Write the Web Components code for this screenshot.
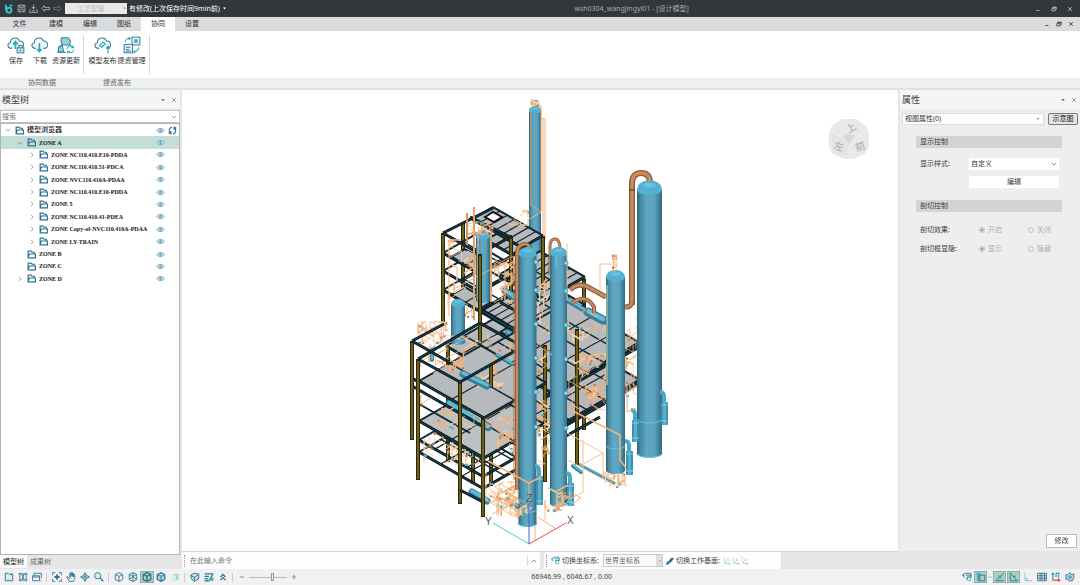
<!DOCTYPE html>
<html lang="zh-CN">
<head>
<meta charset="utf-8">
<title>设计模型</title>
<style>
    :root {
        --bar-dark: #32373b;
        --line: #d9dbdb;
        --panel: #eeeeee;
        --strip: #e6e6e6;
        --active: #a9cfc6;
        --selected: #c3ddd7;
        --text: #3c3c3c;
        --blue: #2f7192;
    }

    html, body {
        height: 100%;
        margin: 0;
    }

    body {
        font: 7px/10px "Noto Sans", "Noto Sans CJK SC", sans-serif;
        color: var(--text);
        overflow: hidden;
    }
</style>
</head>
<body>
<design-app></design-app>

<script>
/* Estilos comunes de los controles */
const base = /*html*/ `
<style>
    :host { box-sizing: border-box; }
    * { box-sizing: border-box; margin: 0; padding: 0; }
    button, input, select { font: inherit; color: inherit; border: 0; background: none; border-radius: 0; outline: none; }
    button { cursor: pointer; display: flex; align-items: center; justify-content: center; white-space: nowrap; }
    select { appearance: none; }
</style>`;

const cube = '<path d="M8 1l6 3v8l-6 3-6-3V4zM2 4l6 3 6-3M8 7v8"/>';
const cloud = '<path d="M9 22H7C0 21 0 12 6 12 6 2 20 1 22 9c9-1 10 12 2 13h-2" fill="#eef8fa"/>';

const icons = {
    logo: '<g stroke="#36c3cf" stroke-width="3"><path d="M3 1v9"/><circle cx="8" cy="10" r="4"/><path d="M9 3l4-1"/></g>',
    disk: '<path d="M2 2h12v12H2zM5 2v4h6V2M5 14V9h6v5"/>',
    export: '<path d="M8 1v7M5 5l3 4 3-4M3 9l-2 3v3h14v-3l-2-3M5 12h6"/>',
    undo: '<path d="M1 8l5-5v3h9v4H6v3z"/>',
    redo: '<path d="M15 8l-5-5v3H1v4h9v3z"/>',
    min: '<path d="M3 12h9" stroke-width="2"/>',
    restore: '<path d="M2 7h9v6H2zM5 7V3h9v6h-3M5 4h9" stroke-width="2"/>',
    close: '<path d="M3 3l10 10M13 3L3 13" stroke-width="2"/>',
    down: '<path d="M3 5h10l-5 6z" fill="currentColor" stroke="none"/>',
    chevron: '<path d="M2 5l6 6 6-6" stroke-width="2"/>',
    chevronUp: '<path d="M2 11l6-6 6 6" stroke-width="2"/>',
    chevronRight: '<path d="M5 2l6 6-6 6" stroke-width="2"/>',
    folder: '<path d="M2 14V2h5l2 2h4v3M2 14l2-7h11v7z" stroke-width="2"/>',
    eye: '<path d="M1 8c4-5 10-5 14 0-4 5-10 5-14 0z" fill="#e4f1f6" stroke="#5795b3"/><circle cx="8" cy="8" r="2" fill="#8fbdd2" stroke="#3f83a5"/>',
    sync: '<path d="M7 2C2 3 1 9 4 13M1 12l4 2V9M9 14c5-1 6-7 3-11M15 4l-4-2v5" stroke-width="2"/>',
    save: cloud + '<path d="M15 23V11M11 15l4-5 4 5" stroke="#28a9b4" stroke-width="3"/><rect x="18" y="21" width="12" height="9" fill="#c5dcea"/><path d="M21 21v-4h6v4M24 24v3"/>',
    download: cloud + '<path d="M15 13v14M11 23l4 5 4-5" stroke="#28a9b4" stroke-width="3"/>',
    refresh: '<path d="M8 3h12l4 6-2 7H9L7 9zM2 29l1-9 6-4 3 12z" fill="#8fd3d2"/><path d="M2 29h14M9 16l-6 4-1 9M22 16l3 1" /><path d="M18 23c0-6 8-7 10-3M29 17v4h-4M30 24c-1 6-8 7-10 3M19 31v-4h4" stroke="#28a9b4"/>',
    publish: cloud + '<path d="M10 17l6-6 4 3-6 6zM13 20l7-6M25 31V18M22 22l3-4 3 4" stroke="#28a9b4" stroke-width="2"/>',
    manage: '<rect x="16" y="2" width="14" height="14" fill="#e4f2f6"/><rect x="20" y="6" width="6" height="6" fill="#35afb5" stroke="none"/><rect x="2" y="15" width="15" height="15" fill="#e4f2f6"/><path d="M5 20h8M5 24h6M5 27h9"/><path d="M4 11c0-5 4-7 8-7M10 2l3 2-3 3M28 20c0 5-3 7-8 8M22 26l-3 2 3 3" stroke="#28a9b4"/>',
    file: '<path d="M2 14V2h5l2 2h5v10z" fill="#d2ebf0"/><path d="M10 2h4" stroke="#35afb5"/>',
    fit: '<path d="M3 1v14M13 1v14M1 3h14M1 13h14M6 3l4 10M10 3L6 13"/>',
    windows: '<path d="M3 6V2h12v8M1 6h11v8H1zM1 8h11"/><path d="M12 12l3 2" stroke="#35afb5"/>',
    zoomAll: '<path d="M1 5V1h4M11 1h4v4M15 11v4h-4M5 15H1v-4"/><path d="M8 4v8M4 8h8" stroke-width="3"/>',
    hand: '<path d="M4 9L2 7 1 8l4 7h7l2-5V4h-2v4-6h-2v5-6H8v6-5H6v8z" fill="#e4f2f5"/>',
    orbit: '<path d="M8 1l2 4 5 3-5 3-2 4-2-4-5-3 5-3zM4 8h8M8 4v8" fill="#cfe8ee"/>',
    lens: '<circle cx="6" cy="6" r="5" fill="#d2ebf0"/><path d="M10 10l5 5" stroke-width="2"/>',
    cube,
    cubeWire: cube + '<path d="M8 1v6M2 12l6-5 6 5"/>',
    cubeLine: '<g stroke-width="2">' + cube + '</g>',
    cubeShade: '<path d="M8 1l6 3v8l-6 3-6-3V4z" fill="#a8d3e0"/>' + cube,
    cubeSolid: '<path d="M3 5l5-2h6v8l-5 3H3z" fill="#a6d6dc" stroke="none"/><path d="M3 5h6v9H3z" fill="#dceff0" stroke="none"/>',
    section: '<path d="M1 5l5-3 8 1v8l-7 4-5-4zM2 6l5 2 7-4M7 8v6" fill="#b9dce4"/>',
    layers: '<path d="M1 3h14M1 7h7M1 11h6M1 14h8M9 12l5-8" stroke-width="2"/><path d="M9 9h6v5H9z" fill="#35afb5" stroke="none"/>',
    up2: '<path d="M4 8l4-4 4 4M4 13l4-4 4 4" stroke-width="2"/>',
    minus: '<path d="M2 8h12" stroke-width="3"/>',
    plus: '<path d="M2 8h12M8 2v12" stroke-width="3"/>',
    axis: '<path d="M1 5l4-3h9v3M4 5H1l3 4M6 5h9v3H8v4"/><circle cx="11" cy="11" r="3" stroke="#35afb5"/>',
    box: '<path d="M3 5h11v9H3zM6 2v12M3 8h3"/><circle cx="3" cy="3" r="2" stroke="#35afb5"/>',
    snap: '<path d="M1 14h13M2 13L14 2M6 6l3 4"/><circle cx="8" cy="8" r="2" stroke="#35afb5"/>',
    angle: '<path d="M2 1v13h12M3 2l10 12M7 8l4-2"/>',
    ortho: '<path d="M3 1v13h12M3 10h4v4" stroke="#8abdd0"/>',
    grid: '<path d="M1 2h14v12H1zM1 6h14M1 10h14M5 2v12M8 2v12M12 2v12"/>',
    dims: '<path d="M3 2v10M1 4l2-2 2 2M8 2h6M8 2v6M12 4v5" stroke="#28a9b4" stroke-width="2"/><path d="M2 13h12M11 11l3 2-3 2" stroke="#e14b4b" stroke-width="2"/>',
    gear: '<path d="M8 1l2 3 4-1 0 4 1 1-2 3-1 3-3-1-2 2-2-3-4-1 1-3-1-3 4-1z" fill="#b9dce4"/><circle cx="8" cy="8" r="2"/>',
    brush: '<path d="M1 15l2-6 4 4zM5 9l6-7 4 1-6 8z" fill="#1f668c" stroke="#1f668c"/>',
    plane: '<path d="M3 2l2 11 10 1M5 13l6-7M8 5l3 1v3" stroke="#9fdbe0"/><path d="M10 13l5 1" stroke="#f08b8b"/>'
};

class UiIcon extends HTMLElement {
    constructor() {
        super();
        this.attachShadow({ mode: 'open' });
    }

    connectedCallback() {
        const name = this.getAttribute('name');
        const size = this.getAttribute('size') || 10;
        // los iconos de la cinta usan una rejilla de 32
        const view = ['save', 'download', 'refresh', 'publish', 'manage'].includes(name) ? 32 : 16;
        this.shadowRoot.innerHTML = /*html*/ `
        <style>
            :host { display: inline-flex; flex: none; }
            svg { display: block; fill: none; stroke: currentColor; stroke-width: ${view === 32 ? 1.8 : 1.4}; }
        </style>
        <svg width="${size}" height="${size}" viewBox="0 0 ${view} ${view}" aria-hidden="true">${icons[name]}</svg>`;
    }
}
customElements.define('ui-icon', UiIcon);

class TitleBar extends HTMLElement {
    constructor() {
        super();
        this.attachShadow({ mode: 'open' }).innerHTML = base + /*html*/ `
        <style>
            :host {
                display: grid;
                grid-template-columns: 53% 1fr auto;
                align-items: center;
                height: 17px;
                background: var(--bar-dark);
                color: #fff;
            }
            .quick, .window { display: flex; align-items: center; gap: 2px; }
            .quick { padding-left: 4px; }
            .quick button { width: 10px; height: 14px; color: #b9c0c4; }
            .quick button:disabled { color: #70777b; }
            .box { display: flex; align-items: center; margin-left: 1px; width: 62px; height: 11px; background: #e9e9e9; color: #aaa; }
            select { flex: 1; padding-left: 12px; height: 11px; color: #c0c0c0; opacity: 1; }
            h1 { font-size: 7px; font-weight: 400; padding-left: 2px; color: #a7abad; }
            .window { gap: 6px; padding-right: 5px; color: #c4c7c9; }
            .window button { width: 10px; height: 12px; }
        </style>
        <div class="quick">
            <ui-icon name="logo" size="10"></ui-icon>
            <button aria-label="保存"><ui-icon name="disk" size="9"></ui-icon></button>
            <button aria-label="导出"><ui-icon name="export" size="9"></ui-icon></button>
            <button aria-label="撤销"><ui-icon name="undo" size="9"></ui-icon></button>
            <button aria-label="重做" disabled><ui-icon name="redo" size="9"></ui-icon></button>
            <div class="box"><select aria-label="专业" disabled><option>工艺配管</option></select><ui-icon name="down" size="5"></ui-icon></div>
            <span>有修改(上次保存时间9min前)</span>
            <ui-icon name="down" size="5"></ui-icon>
        </div>
        <h1>wsh0304_wangjingyi01 - [设计模型]</h1>
        <div class="window">
            <button aria-label="最小化"><ui-icon name="min" size="6"></ui-icon></button>
            <button aria-label="还原"><ui-icon name="restore" size="6"></ui-icon></button>
            <button aria-label="关闭"><ui-icon name="close" size="6"></ui-icon></button>
        </div>`;
    }
}
customElements.define('title-bar', TitleBar);

class MenuTabs extends HTMLElement {
    constructor() {
        super();
        this.attachShadow({ mode: 'open' }).innerHTML = base + /*html*/ `
        <style>
            :host { display: flex; height: 14px; background: #dadbdc; color: #303030; }
            .tab { width: 34px; }
            .tab:first-of-type { width: 39px; }
            .tab.on { background: #fff; }
            .window { display: flex; margin-left: auto; padding-right: 4px; gap: 2px; }
            .window button { width: 10px; }
        </style>
        ${['文件', '建模', '编辑', '图纸', '协同', '设置'].map(t => `<button class="tab ${t === '协同' ? 'on' : ''}">${t}</button>`).join('')}
        <div class="window">
            <button aria-label="最小化"><ui-icon name="min" size="6"></ui-icon></button>
            <button aria-label="还原"><ui-icon name="restore" size="6"></ui-icon></button>
            <button aria-label="关闭"><ui-icon name="close" size="6"></ui-icon></button>
        </div>`;
    }
}
customElements.define('menu-tabs', MenuTabs);

class RibbonButton extends HTMLElement {
    constructor() {
        super();
        this.attachShadow({ mode: 'open' });
    }

    connectedCallback() {
        this.shadowRoot.innerHTML = base + /*html*/ `
        <style>
            :host { display: block; min-width: 24px; }
            button { flex-direction: column; gap: 2px; width: 100%; color: #3f7f9d; }
            span { color: #333; }
        </style>
        <button><ui-icon name="${this.getAttribute('icon')}" size="18"></ui-icon><span><slot></slot></span></button>`;
    }
}
customElements.define('ribbon-button', RibbonButton);

class RibbonGroup extends HTMLElement {
    constructor() {
        super();
        this.attachShadow({ mode: 'open' });
    }

    connectedCallback() {
        this.shadowRoot.innerHTML = base + /*html*/ `
        <style>
            :host { display: flex; flex-direction: column; }
            .row { display: flex; height: 39px; margin: 4px 0; padding: 1px 3px 0 4px; border-right: 1px solid #d8dada; }
            p { text-align: center; color: #666; }
        </style>
        <div class="row"><slot></slot></div>
        <p>${this.getAttribute('label')}</p>`;
    }
}
customElements.define('ribbon-group', RibbonGroup);

class RibbonBar extends HTMLElement {
    constructor() {
        super();
        this.attachShadow({ mode: 'open' }).innerHTML = base + /*html*/ `
        <style>
            :host {
                display: flex;
                height: 59px;
                background: linear-gradient(#fff 47px, #edf1f1 47px);
                border-bottom: 2px solid #dfe1e1;
            }
            .wide { min-width: 29px; }
        </style>
        <ribbon-group label="协同数据">
            <ribbon-button icon="save">保存</ribbon-button>
            <ribbon-button icon="download">下载</ribbon-button>
            <ribbon-button icon="refresh">资源更新</ribbon-button>
        </ribbon-group>
        <ribbon-group label="提资发布">
            <ribbon-button class="wide" icon="publish">模型发布</ribbon-button>
            <ribbon-button class="wide" icon="manage">提资管理</ribbon-button>
        </ribbon-group>`;
    }
}
customElements.define('ribbon-bar', RibbonBar);

/* Cabecera común de los paneles laterales */
class PanelHeader extends HTMLElement {
    constructor() {
        super();
        this.attachShadow({ mode: 'open' }).innerHTML = base + /*html*/ `
        <style>
            :host { display: flex; align-items: center; height: 19px; background: #f5f5f5; }
            h2 { flex: 1; padding-left: 2px; font-size: 9px; font-weight: 400; }
            button { width: 11px; height: 11px; color: #777; }
            button:last-of-type { margin-right: 1px; }
        </style>
        <h2><slot></slot></h2>
        <button aria-label="选项"><ui-icon name="down" size="6"></ui-icon></button>
        <button aria-label="关闭"><ui-icon name="close" size="6"></ui-icon></button>`;
    }
}
customElements.define('panel-header', PanelHeader);

const nodes = [
    ['模型浏览器', 0, 'open'],
    ['ZONE A', 1, 'open'],
    ['ZONE NC110.410.E10-PDDA', 2, 'closed'],
    ['ZONE NC110.410.51-PDCA', 2, 'closed'],
    ['ZONE NVC110.410A-PDAA', 2, 'closed'],
    ['ZONE NC110.410.E10-PDDA', 2, 'closed'],
    ['ZONE 5', 2, 'closed'],
    ['ZONE NC110.410.41-PDEA', 2, 'closed'],
    ['ZONE Copy-of-NVC110.410A-PDAA', 2, 'closed'],
    ['ZONE LY-TRAIN', 2, 'closed'],
    ['ZONE B', 1, ''],
    ['ZONE C', 1, ''],
    ['ZONE D', 1, 'closed']
];

class ModelTree extends HTMLElement {
    constructor() {
        super();
        this.attachShadow({ mode: 'open' });
    }

    connectedCallback() {
        this.shadowRoot.innerHTML = base + /*html*/ `
        <style>
            :host { display: flex; flex-direction: column; min-height: 0; }
            .search { display: flex; align-items: center; height: 13px; margin-top: 1px; background: #fff; border: 1px solid #c4c4c4; padding-right: 2px; color: #888; }
            .search input { flex: 1; min-width: 0; padding-left: 1px; }
            .search input::placeholder { color: #777; opacity: 1; }
            .tree { flex: 1; background: #fff; border: 1px solid #b3b3bb; }
            ul { display: grid; grid-auto-rows: 1fr; height: 161px; list-style: none; }
            li { display: flex; align-items: center; gap: 3px; padding-left: calc(2px + var(--level) * 12px); color: var(--blue); }
            li.sel { background: var(--selected); }
            li button { width: 9px; height: 10px; }
            .toggle { color: #8a8a8a; }
            .name { flex: 1; white-space: nowrap; color: #111; font: bold 6px/10px "Liberation Serif", "Noto Sans CJK SC", serif; }
            .root .name { font-size: 7px; font-weight: 500; }
            .tail { width: 23px; display: flex; gap: 3px; }
            .tabs { display: flex; height: 14px; background: var(--strip); }
            .tabs button { padding: 0 3px; color: #666; height: 13px; }
            .tabs .on { background: #fafafa; color: #222; }
        </style>
        <panel-header>模型树</panel-header>
        <div class="search"><input type="text" aria-label="搜索" placeholder="搜索"><ui-icon name="chevron" size="6"></ui-icon></div>
        <div class="tree"><ul>${nodes.map((n, i) => this.row(n, i)).join('')}</ul></div>
        <div class="tabs"><button class="on">模型树</button><button>成果树</button></div>`;
    }

    row([name, level, state], i) {
        const arrow = state === 'open' ? 'chevron' : 'chevronRight';
        return /*html*/ `
        <li class="${i === 0 ? 'root' : ''} ${i === 1 ? 'sel' : ''}" style="--level:${level}">
            <button class="toggle" aria-label="展开">${state ? `<ui-icon name="${arrow}" size="6"></ui-icon>` : ''}</button>
            <ui-icon name="folder" size="9"></ui-icon>
            <span class="name">${name}</span>
            <span class="tail">
                <button aria-label="可见"><ui-icon name="eye" size="9"></ui-icon></button>
                ${i === 0 ? '<button aria-label="刷新"><ui-icon name="sync" size="9"></ui-icon></button>' : ''}
            </span>
        </li>`;
    }
}
customElements.define('model-tree', ModelTree);

/* Escena 3D de la planta, proyección isométrica */
class PlantScene extends HTMLElement {
    constructor() {
        super();
        this.attachShadow({ mode: 'open' });
        this.seed = 7;
        this.out = [];
    }

    connectedCallback() {
        this.draw();
        this.shadowRoot.innerHTML = /*html*/ `
        <style>
            :host { display: block; min-height: 0; overflow: hidden; background: #fff; }
            svg { display: block; width: 100%; height: 100%; }
            text { font: 10px "Liberation Sans", sans-serif; fill: #555; }
        </style>
        <svg viewBox="182 90 716 461" preserveAspectRatio="xMidYMid meet" role="img">
            <defs>
                <linearGradient id="steel">
                    <stop offset="0" stop-color="#2b6478"/>
                    <stop offset=".15" stop-color="#4a8ca4"/>
                    <stop offset=".4" stop-color="#5fa8c4"/>
                    <stop offset=".7" stop-color="#5ba3bf"/>
                    <stop offset="1" stop-color="#2f6a80"/>
                </linearGradient>
            </defs>
            ${this.out.join('')}
        </svg>`;
    }

    rnd() {
        this.seed = (this.seed * 16807) % 2147483647;
        return this.seed / 2147483647;
    }

    line(pts, color, w) {
        this.out.push(`<polyline points="${pts.join(' ')}" fill="none" stroke="${color}" stroke-width="${w}" stroke-linejoin="round"/>`);
    }

    beam(x1, y1, x2, y2, w = 3) {
        this.line([x1, y1, x2, y2], '#0b171c', w);
        this.line([x1, y1, x2, y2], '#17465a', w / 3);
    }

    column(x, y1, y2) {
        this.out.push(`<rect x="${x - 2}" y="${y1}" width="4" height="${y2 - y1}" fill="#2b2609"/><rect x="${x - 1}" y="${y1 + 2}" width="2" height="${y2 - y1 - 3}" fill="#6f6118"/>`);
    }

    // x,y: esquina izquierda; a: hacia abajo a la derecha; b: hacia arriba a la derecha
    slab(x, y, a, b, na, nb, fill) {
        const p = (s, t) => [x + s + t, y + s * 0.57 - t * 0.57];
        if (fill) {
            this.out.push(`<polygon points="${[p(0, 0), p(a, 0), p(a, b), p(0, b)].join(' ')}" fill="${fill}"/>`);
        }
        for (let i = 1; i < na; i++) this.line([p(a * i / na, 0), p(a * i / na, b)], '#1a2328', 1.2);
        for (let i = 1; i < nb; i++) this.line([p(0, b * i / nb), p(a, b * i / nb)], '#132a33', 1.5);
        this.beam(...p(0, b), ...p(a, b), 2);
        this.beam(...p(0, 0), ...p(0, b), 2);
        this.beam(...p(0, 0), ...p(a, 0));
        this.beam(...p(a, 0), ...p(a, b));
    }

    vessel(x, top, bottom, r) {
        const e = r / 2.6;
        this.out.push(`
            <path d="M${x - r} ${top + r * 0.8}V${bottom - e}A${r} ${e} 0 0 0 ${x + r} ${bottom - e}V${top + r * 0.8}z" fill="url(#steel)"/>
            <path d="M${x - r} ${top + r * 0.8}C${x - r} ${top - r * 0.25} ${x + r} ${top - r * 0.25} ${x + r} ${top + r * 0.8}A${r} ${e} 0 0 1 ${x - r} ${top + r * 0.8}z" fill="#55b0d0"/>
            <ellipse cx="${x}" cy="${top + r * 0.42}" rx="${r * 0.5}" ry="${r * 0.2}" fill="#66c2e0"/>`);
    }

    ring(x, y, r) {
        this.out.push(`<path d="M${x - r} ${y}A${r} ${r / 3} 0 0 0 ${x + r} ${y}" fill="none" stroke="#62c6e4"/>`);
    }

    drum(x1, y1, x2, y2, w) {
        this.out.push(`<line x1="${x1}" y1="${y1}" x2="${x2}" y2="${y2}" stroke="#35819c" stroke-width="${w}" stroke-linecap="round"/><line x1="${x1}" y1="${y1 - 1}" x2="${x2}" y2="${y2 - 1}" stroke="#61bad8" stroke-width="${w / 2}" stroke-linecap="round"/>`);
    }

    // intercambiador vertical con codo superior
    reboiler(x, y1, y2) {
        this.out.push(`<path d="M${x} ${y1}v-5q0-5-4-5" fill="none" stroke="#4aa7c6" stroke-width="4"/>
            <rect x="${x - 3}" y="${y1}" width="7" height="${y2 - y1}" rx="1" fill="#3f8fae"/><rect x="${x - 1}" y="${y1}" width="3" height="${y2 - y1}" fill="#57b1cf"/>
            <path d="M${x - 3} ${y1 + 3}h7M${x - 3} ${y2 - 4}h7" stroke="#7bd3ec"/>`);
    }

    duct(d, w) {
        this.out.push(`<path d="${d}" fill="none" stroke="#8b5d3b" stroke-width="${w}"/><path d="${d}" fill="none" stroke="#c98b5d" stroke-width="${w * 0.55}"/>`);
    }

    // tuberías finas con válvulas dentro de una zona
    piping(x, y, w, h, count, len = 12) {
        const dirs = [[0, 1], [0, -1], [1, 0.57], [-1, -0.57], [1, -0.57], [-1, 0.57]];
        for (let i = 0; i < count; i++) {
            let px = x + this.rnd() * w, py = y + this.rnd() * h;
            const pts = [[px.toFixed(1), py.toFixed(1)]];
            for (let k = 0; k < 3; k++) {
                const d = dirs[Math.floor(this.rnd() * 6)];
                const l = 2 + this.rnd() * len;
                px = Math.max(x, Math.min(x + w, px + d[0] * l));
                py = Math.max(y, Math.min(y + h, py + d[1] * l));
                pts.push([px.toFixed(1), py.toFixed(1)]);
            }
            this.line(pts, this.rnd() > 0.3 ? '#f4b27a' : '#f9cfa5', this.rnd() > 0.75 ? 1.5 : 0.8);
            if (i % 4 === 0) this.out.push(`<rect x="${pts[1][0]}" y="${pts[1][1]}" width="2" height="2" fill="#b9774a"/>`);
            if (i % 9 === 0) this.out.push(`<rect x="${pts[2][0]}" y="${pts[2][1]}" width="3" height="2" fill="#4db4d4"/>`);
        }
    }

    draw() {
        const grey = '#b6babd';
        const pale = '#f8c18f';
        const orange = '#f4b27a';

        // torre del fondo
        this.vessel(535, 106, 262, 6);
        this.line([531, 110, 531, 205, 541, 212, 541, 106, 535, 103], '#e8a169', 1);
        this.line([543, 118, 543, 240], orange, 1);
        this.line([545, 119, 545, 240], orange, 1);
        this.line([541, 118, 545, 119], orange, 1);
        this.line([541, 212, 528, 220, 528, 232], orange, 1);
        this.piping(531, 99, 8, 6, 8, 3);

        // bloque alto
        this.column(463, 222, 320);
        this.column(584, 279, 430);
        this.column(493, 208, 225);
        this.slab(446, 346, 90, 55, 6, 3, grey);
        this.slab(500, 332, 45, 42, 6, 2, grey);
        this.slab(480, 310, 58, 46, 9, 2, grey);
        this.beam(480, 310, 516, 331, 5);
        this.slab(443, 290, 37, 40, 2, 2, '');
        this.slab(451, 295, 27, 14, 2, 1, grey);
        this.slab(500, 302, 45, 40, 6, 2, grey);
        this.slab(443, 271, 37, 40, 2, 1, '');
        this.slab(500, 274, 45, 40, 6, 2, grey);
        this.slab(443, 253, 37, 40, 2, 2, '');
        this.slab(451, 257, 29, 14, 2, 1, grey);
        this.slab(486, 240, 26, 18, 3, 1, grey);
        this.slab(472, 219, 50, 21, 7, 1, grey);
        this.out.push('<polygon points="485,217 493,212 502,217 494,222" fill="#fff" stroke="#111" stroke-width="2"/>');
        this.beam(443, 233, 493, 208);
        this.beam(443, 233, 480, 254);
        this.beam(480, 254, 512, 236);
        this.beam(470, 217, 512, 238);
        this.column(511, 237, 300);
        this.column(543, 236, 290);
        this.drum(505, 291, 514, 297, 7);
        this.drum(508, 333, 516, 339, 6);
        this.piping(448, 240, 30, 76, 18, 10);
        this.piping(484, 256, 30, 50, 18);
        this.vessel(483, 231, 303, 7);
        this.piping(467, 222, 26, 12, 16, 6);
        this.line([467, 213, 467, 245], '#d29363', 2);
        this.line([474, 207, 474, 320], '#e0a473', 2);
        this.line([491, 232, 491, 302], '#e0a473', 2);
        this.line([478, 235, 478, 300], pale, 1);
        this.line([449, 240, 449, 316], orange, 1);
        this.line([452, 290, 505, 262, 505, 300], orange, 1);
        this.column(480, 254, 345);
        this.column(443, 233, 325);
        this.piping(508, 211, 20, 14, 6, 8);

        // plataformas de la derecha
        this.column(556, 390, 432);
        this.slab(480, 389, 75, 88, 3, 5, grey);
        this.beam(545, 434, 638, 381);
        this.drum(560, 362, 580, 373, 4);
        this.slab(480, 352, 75, 88, 3, 5, grey);
        this.beam(545, 397, 638, 344, 4);
        this.column(577, 329, 465);
        this.column(545, 345, 482);
        this.beam(566, 436, 600, 417);
        this.drum(588, 312, 603, 320, 9);
        this.drum(567, 300, 584, 310, 5);
        this.duct('M570 290q8-8 18-3l18 10', 5);
        this.duct('M572 303q14-10 22 4v6', 4);
        this.piping(580, 354, 26, 12, 16, 8);
        this.piping(582, 384, 18, 14, 18, 6);
        this.piping(568, 310, 38, 100, 24);
        this.piping(626, 315, 12, 80, 14);

        // bloque bajo
        this.vessel(458, 299, 345, 7);
        this.column(448, 345, 462);
        this.column(473, 430, 484);
        this.column(491, 430, 486);
        this.slab(419, 452, 64, 44, 3, 2, '');
        this.slab(419, 440, 64, 44, 4, 3, '');
        this.piping(424, 432, 60, 32, 20);
        this.slab(419, 421, 65, 60, 2, 2, '#bcc1c4');
        this.drum(449, 404, 488, 427, 8);
        this.beam(412, 386, 486, 428);
        this.beam(419, 404, 470, 433, 2);
        this.piping(420, 395, 90, 34, 12);
        this.slab(419, 381, 65, 62, 2, 2, grey);
        this.beam(412, 378, 420, 383);
        this.piping(420, 335, 94, 52, 32);
        this.piping(418, 322, 28, 20, 24, 8);
        this.column(491, 364, 388);
        this.drum(463, 374, 487, 386, 7);
        this.drum(497, 355, 512, 364, 4);
        this.drum(432, 350, 432, 360, 4);
        this.beam(412, 341, 449, 362);
        this.beam(412, 341, 444, 324);
        this.beam(418, 359, 480, 323);
        this.beam(418, 359, 460, 382);
        this.beam(460, 382, 515, 351);
        this.beam(480, 323, 520, 345);
        this.drum(472, 492, 487, 501, 7);
        this.drum(508, 500, 520, 508, 5);
        this.column(412, 341, 440);
        this.column(418, 359, 480);
        this.column(460, 382, 504);
        this.beam(460, 490, 483, 502);
        this.column(483, 418, 517);
        this.piping(490, 482, 28, 34, 28);
        this.piping(498, 418, 17, 34, 20, 8);
        this.line([488, 494, 517, 511, 529, 504], orange, 1);
        this.line([486, 470, 486, 500, 520, 520], pale, 1);

        // columna grande con su bajante
        this.duct('M632 305V184q0-11 9-11 9 0 9 10', 6);
        this.duct('M632 300q0 8-8 7', 5);
        this.line([629, 190, 635, 190], '#3c2d22', 1);
        this.vessel(649.5, 180, 458, 12.5);
        this.ring(649.5, 419, 12);
        this.ring(649.5, 453, 13);
        this.reboiler(664, 402, 425);
        this.reboiler(635, 420, 442);
        this.line([627, 385, 627, 412, 636, 408], orange, 1);

        // columnas frontales
        this.drum(580, 465, 614, 483, 3);
        this.piping(604, 472, 22, 14, 14, 6);
        this.vessel(615.5, 270, 474, 9.5);
        this.ring(615.5, 446, 9);
        this.line([600, 290, 600, 264, 612, 264], pale, 1);
        this.piping(612, 255, 5, 16, 7, 4);
        this.line([607, 285, 607, 385], '#d7e5ba', 1);
        this.line([567, 408, 620, 435, 620, 460, 626, 468], orange, 1.5);
        this.reboiler(629, 451, 475);

        this.duct('M550 275V246q0-7 5-7 5 0 5 11', 3);
        this.vessel(558.5, 247, 507, 8.5);
        this.duct('M517 490V256q0-12 8-12 5 0 5 7', 4);
        this.line([514, 256, 514, 480], '#b17b50', 1);
        this.vessel(527.5, 247, 527, 9);
        this.ring(527.5, 509, 10);
        this.ring(527.5, 523, 10);
        this.line([567, 243, 567, 300], pale, 1);
        this.piping(538, 400, 11, 65, 22, 8);
        this.piping(538, 280, 11, 110, 16, 8);
        for (const y of [262, 290, 324, 358, 392, 427]) {
            this.out.push(`<circle cx="536" cy="${y}" r="2" fill="#9fdcf0" stroke="#3f9fbd"/><circle cx="566" cy="${y + 1}" r="2" fill="#9fdcf0" stroke="#3f9fbd"/>`);
        }
        this.line([556, 256, 556, 268], '#63cdec', 1);
        this.reboiler(539, 476, 505);
        this.reboiler(570, 483, 506);
        this.piping(545, 488, 26, 22, 12, 8);
        this.piping(519, 498, 12, 18, 8, 6);
        this.line([488, 461, 529, 483, 541, 477], orange, 1.5);
        this.line([529, 483, 529, 505], orange, 1);
        this.line([557, 508, 557, 491, 568, 485], orange, 1.5);
        this.drum(573, 466, 581, 472, 4);
        this.line([567, 433, 603, 453, 580, 466], pale, 1);
        this.line([568, 460, 603, 479, 603, 452], pale, 1);
        this.line([583, 440, 583, 492, 568, 500], pale, 1);
        this.line([572, 493, 581, 498, 572, 504], orange, 1);
        this.line([538, 517, 556, 529], orange, 1);
        this.line([545, 500, 545, 520], pale, 1);
        this.line([535, 525, 535, 540], orange, 1);

        // ejes
        this.line([529, 544, 493, 523], '#3ddbb0', 1);
        this.line([529, 544, 566, 523], '#f04848', 1);
        this.line([529, 544, 529, 503], '#4063d8', 1);
        this.out.push('<text x="485" y="525">Y</text><text x="567" y="524">X</text><text x="526" y="502">Z</text>');
    }
}
customElements.define('plant-scene', PlantScene);

class ViewCube extends HTMLElement {
    constructor() {
        super();
        this.attachShadow({ mode: 'open' }).innerHTML = /*html*/ `
        <style>
            :host { display: block; }
            svg { display: block; overflow: visible; }
            text { font: 10px "Noto Sans CJK SC", sans-serif; fill: #a8a8a8; text-anchor: middle; }
        </style>
        <svg width="42" height="42" viewBox="0 0 42 42">
            <path d="M14 1h14l10 7 3 7v14l-4 7-11 5H16L5 36l-4-7V15l3-7z" fill="#e9e9e9"/>
            <path d="M21 23L4 14v15l4 7 11 5h2z" fill="#e4e4e4"/>
            <path d="M15 18l6-2 6 2-6 8z" fill="#d8d8d8"/>
            <path d="M4 14l13 7M38 14l-13 7M21 27v14" stroke="#f1f1f1" fill="none"/>
            <text x="23" y="14" transform="rotate(-30 22 10)">上</text>
            <text x="11" y="32" transform="rotate(15 10 28)">左</text>
            <text x="32" y="32" transform="rotate(-15 32 28)">前</text>
        </svg>`;
    }
}
customElements.define('view-cube', ViewCube);

class CommandStrip extends HTMLElement {
    constructor() {
        super();
        this.attachShadow({ mode: 'open' }).innerHTML = base + /*html*/ `
        <style>
            :host { display: flex; gap: 4px; height: 18px; background: var(--strip); border-top: 1px solid #d5d5d5; }
            .bar { display: flex; align-items: center; background: #fdfdfd; border-radius: 2px; }
            .grip { width: 1px; height: 12px; margin: 0 2px; border-left: 1px dotted #999; }
            .cmd { flex: 0 0 50%; }
            .cmd input { flex: 1; min-width: 0; padding-left: 3px; }
            .cmd input::placeholder { color: #777; opacity: 1; }
            .cmd button { width: 13px; height: 10px; border-left: 1px solid #ddd; color: var(--blue); }
            .tools { flex: 0 0 237px; gap: 2px; }
            .box { display: flex; align-items: center; width: 60px; height: 13px; margin: 0 1px 0 2px; border: 1px solid #ccc; background: #dedede; color: #999; }
            .box select { flex: 1; height: 11px; margin-right: 2px; padding-left: 1px; background: #fafafa; color: #666; }
            .blue { color: #2389a3; }
            .planes { display: flex; }
            .planes button { width: 9px; height: 12px; }
        </style>
        <div class="bar cmd">
            <span class="grip"></span>
            <input type="text" aria-label="命令" placeholder="在此输入命令">
            <button aria-label="展开"><ui-icon name="chevronUp" size="6"></ui-icon></button>
        </div>
        <div class="bar tools">
            <span class="grip"></span>
            <ui-icon class="blue" name="axis" size="9"></ui-icon>
            <label for="coord">切换坐标系:</label>
            <div class="box"><select id="coord"><option>世界坐标系</option></select><ui-icon name="down" size="4"></ui-icon></div>
            <ui-icon name="brush" size="8"></ui-icon>
            <span>切换工作基面:</span>
            <div class="planes">
                <button aria-label="XY"><ui-icon name="plane" size="9"></ui-icon></button>
                <button aria-label="YZ"><ui-icon name="plane" size="9"></ui-icon></button>
                <button aria-label="XZ"><ui-icon name="plane" size="9"></ui-icon></button>
            </div>
        </div>`;
    }
}
customElements.define('command-strip', CommandStrip);

class PropertyPanel extends HTMLElement {
    constructor() {
        super();
        this.attachShadow({ mode: 'open' }).innerHTML = base + /*html*/ `
        <style>
            :host { display: flex; flex-direction: column; background: var(--panel); min-height: 0; }
            .top { display: flex; gap: 4px; padding: 4px 2px 0; }
            .field { display: flex; align-items: center; height: 12px; background: #fff; padding-right: 3px; color: #666; }
            .field select { flex: 1; height: 12px; padding-left: 2px; color: #333; }
            .top .field { flex: 1; border: 1px solid #ddd; }
            .top button { width: 30px; height: 12px; border: 1px solid #777; border-radius: 2px; background: #e4e4e4; color: #111; }
            .body { flex: 1; padding: 11px 18px 0 16px; }
            h3 { height: 12px; padding: 0 4px; background: #d4d4d4; font-size: 7px; font-weight: 400; line-height: 11px; }
            .form { display: grid; grid-template-columns: 49px 1fr; align-items: center; padding: 10px 3px 12px 4px; row-gap: 6px; }
            .form .field { padding-right: 2px; }
            .form button { grid-column: 2; height: 12px; background: #fff; }
            .radios { row-gap: 7px; padding-top: 12px; }
            .choice { display: flex; padding-left: 10px; color: #b0b0b0; height: 12px; align-items: center; }
            .choice label { display: flex; align-items: center; gap: 3px; width: 49px; }
            input[type=radio] { appearance: none; width: 6px; height: 6px; border: 1px solid #c4c4c4; border-radius: 50%; }
            input[type=radio]:checked { background: radial-gradient(#a0a0a0 1px, transparent 2px); }
            .foot { display: flex; justify-content: flex-end; padding: 3px; }
            .foot button { width: 31px; height: 14px; border: 1px solid #bbb; background: #fff; }
            .strip { height: 18px; background: var(--strip); }
        </style>
        <panel-header>属性</panel-header>
        <div class="top">
            <div class="field"><select aria-label="视图属性"><option>视图属性(0)</option></select><ui-icon name="down" size="4"></ui-icon></div>
            <button>示意图</button>
        </div>
        <div class="body">
            <h3>显示控制</h3>
            <div class="form">
                <label for="mode">显示样式:</label>
                <div class="field"><select id="mode"><option>自定义</option></select><ui-icon name="chevron" size="6"></ui-icon></div>
                <button>编辑</button>
            </div>
            <h3>剖切控制</h3>
            <div class="form radios">
                <span>剖切效果:</span>
                <div class="choice">
                    <label><input type="radio" name="cut" checked disabled>开启</label>
                    <label><input type="radio" name="cut" disabled>关闭</label>
                </div>
                <span>剖切框显隐:</span>
                <div class="choice">
                    <label><input type="radio" name="frame" checked disabled>显示</label>
                    <label><input type="radio" name="frame" disabled>隐藏</label>
                </div>
            </div>
        </div>
        <div class="foot"><button>修改</button></div>
        <div class="strip"></div>`;
    }
}
customElements.define('property-panel', PropertyPanel);

class StatusBar extends HTMLElement {
    constructor() {
        super();
        this.attachShadow({ mode: 'open' });
    }

    connectedCallback() {
        const group = (names, on = []) => names.map(n =>
            `<button aria-label="${n}" class="${on.includes(n) ? 'on' : ''}"><ui-icon name="${n}" size="10"></ui-icon></button>`).join('');
        this.shadowRoot.innerHTML = base + /*html*/ `
        <style>
            :host { display: grid; grid-template-columns: 49% 1fr auto; align-items: center; height: 16px; background: #f1f1f1; color: var(--blue); }
            div { display: flex; align-items: center; }
            .left { padding-left: 2px; }
            .right { padding-right: 4px; gap: 1px; }
            button { width: 14px; height: 12px; }
            .on { background: var(--active); outline: 1px solid #86b5aa; outline-offset: -1px; }
            .right button { width: 13px; }
            i { width: 1px; height: 9px; margin: 0 3px 0 2px; background: #ccc; }
            .zoom { color: #999; }
            .zoom button { width: 12px; }
            input { appearance: none; width: 38px; height: 10px; margin: 0 1px; background: linear-gradient(#bbb, #bbb) center / 100% 1px no-repeat; }
            input::-webkit-slider-thumb { appearance: none; width: 3px; height: 8px; border: 1px solid #999; background: #eee; }
            output { color: #444; padding-left: 2px; }
        </style>
        <div class="left">
            ${group(['file', 'fit', 'windows'])}<i></i>
            ${group(['zoomAll', 'hand', 'orbit', 'lens'])}<i></i>
            ${group(['cube', 'cubeWire', 'cubeLine', 'cubeShade', 'cubeSolid'], ['cubeLine'])}<i></i>
            ${group(['section', 'layers', 'up2'])}<i></i>
            <div class="zoom">
                <button aria-label="缩小"><ui-icon name="minus" size="6"></ui-icon></button>
                <input type="range" aria-label="缩放" min="0" max="100" value="64">
                <button aria-label="放大"><ui-icon name="plus" size="6"></ui-icon></button>
            </div>
        </div>
        <output>66946.99 , 6046.67 , 0.00</output>
        <div class="right">
            ${group(['axis', 'box'], ['box'])}<ui-icon name="chevronUp" size="4"></ui-icon>
            ${group(['snap', 'angle', 'ortho', 'grid', 'dims', 'gear'], ['snap', 'angle'])}
        </div>`;
    }
}
customElements.define('status-bar', StatusBar);

class DesignApp extends HTMLElement {
    constructor() {
        super();
        this.attachShadow({ mode: 'open' }).innerHTML = /*html*/ `
        <style>
            :host { display: flex; flex-direction: column; height: 100vh; background: var(--strip); }
            main { flex: 1; min-height: 0; display: grid; grid-template-columns: 180px 1fr 180px; gap: 2px; }
            .center { display: flex; flex-direction: column; min-width: 0; min-height: 0; position: relative; }
            plant-scene { flex: 1; }
            /* el cubo flota sobre la escena */
            view-cube { position: absolute; top: 28px; right: 28px; }
        </style>
        <title-bar></title-bar>
        <menu-tabs></menu-tabs>
        <ribbon-bar></ribbon-bar>
        <main>
            <model-tree></model-tree>
            <div class="center">
                <plant-scene></plant-scene>
                <view-cube></view-cube>
                <command-strip></command-strip>
            </div>
            <property-panel></property-panel>
        </main>
        <status-bar></status-bar>`;
    }
}
customElements.define('design-app', DesignApp);
</script>
</body>
</html>
